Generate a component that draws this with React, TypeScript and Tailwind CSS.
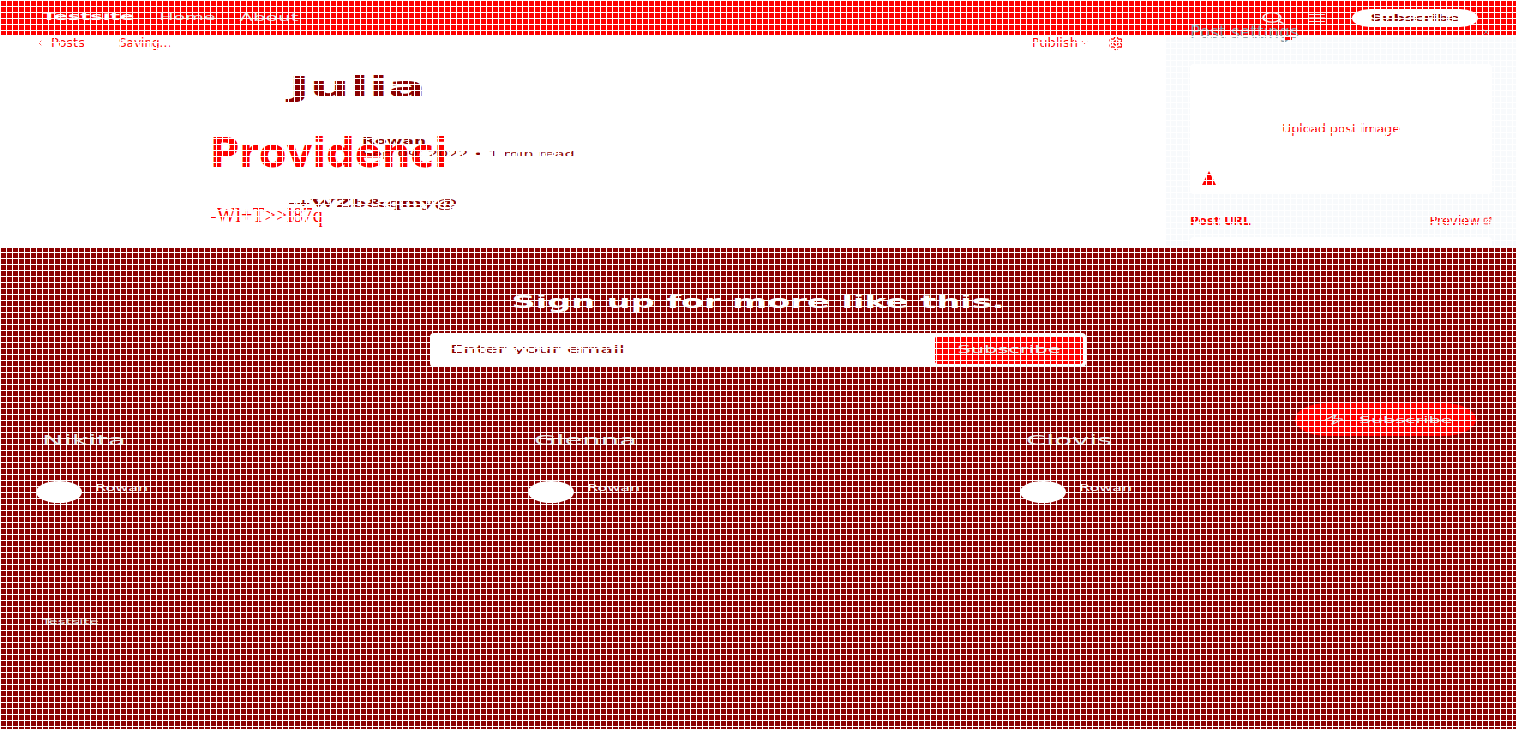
import { ChevronDown, ChevronLeft, ExternalLink, Menu, Search, Settings, X, Zap } from "lucide-react"

const sans = "font-['DejaVu_Sans',sans-serif]"

// site text is squashed to half height in the reference
function Squash({ className, children }: { className?: string; children: React.ReactNode }) {
  return <span className={`inline-block scale-y-50 whitespace-nowrap ${className ?? ""}`}>{children}</span>
}

function AuthorColumn({ name }: { name: string }) {
  return (
    <div className="flex flex-col w-[492px]">
      <div className="pl-[6px] h-[34px] flex items-center">
        <Squash className="text-[29px] text-[#e5e5e5] leading-none">{name}</Squash>
      </div>
      <div className="flex items-center gap-[13px] mt-[23px]">
        <div className="w-[46px] h-[22px] rounded-[50%] bg-white" />
        <Squash className="text-[16px] font-medium text-white leading-none -mt-[8px]">Rowan</Squash>
      </div>
    </div>
  )
}

export default function App() {
  return (
    <div className={`relative w-full h-[729px] overflow-hidden bg-white flex flex-col ${sans}`}>
      {/* Site header */}
      <header className="h-[35px] shrink-0 bg-[#ff0000] flex items-center justify-between pl-[42px] pr-[38px]">
        <nav className="flex items-center -mt-[2px]">
          <Squash className="text-[21px] font-bold text-white leading-none">Testsite</Squash>
          <Squash className="ml-[25px] text-[19px] text-[#e5e5e5] leading-none">Home</Squash>
          <Squash className="ml-[24px] text-[20px] text-[#e5e5e5] leading-none">About</Squash>
        </nav>
        <div className="flex items-center">
          <Search preserveAspectRatio="none" className="w-[26px] h-[14px] text-[#eeeeee] stroke-[2]" />
          <Menu preserveAspectRatio="none" className="ml-[20px] w-[22px] h-[12px] text-[#eeeeee] stroke-[2]" />
          <button className="ml-[24px] w-[126px] h-[18px] rounded-[18px/9px] bg-white flex items-center justify-center">
            <Squash className="text-[16px] font-bold text-[#8b0000] leading-none">Subscribe</Squash>
          </button>
        </div>
      </header>

      {/* Editor */}
      <div className="h-[213px] shrink-0 flex">
        <div className="relative flex-1">
          <div className="h-[15px] flex items-center justify-between pl-[36px] pr-[42px]">
            <div className="flex items-center text-[12px] text-[#ff0000]">
              <ChevronLeft className="w-[8px] h-[10px]" />
              <span className="ml-[7px] text-[13px]">Posts</span>
              <span className="ml-[34px]">Saving...</span>
            </div>
            <div className="flex items-center text-[13px] text-[#ff0000]">
              <span>Publish</span>
              <ChevronDown className="w-[9px] h-[9px] ml-[2px]" />
              <Settings className="ml-[19px] w-[16px] h-[16px]" />
            </div>
          </div>

          {/* Article head, its lines overlap in the reference */}
          <Squash className="absolute left-[289px] top-[24px] text-[56px] font-bold text-[#8b0000] leading-none">Julia</Squash>
          <span className="absolute left-[210px] top-[98px] text-[40px] font-bold text-[#ff0000] leading-none whitespace-nowrap">Providenci</span>
          <Squash className="absolute left-[362px] top-[98px] text-[17px] font-bold text-[#8b0000] leading-none">Rowan</Squash>
          <Squash className="absolute left-[362px] top-[111px] text-[16px] text-[#8b0000] leading-none">Sep 09, 2022 • 1 min read</Squash>
          <Squash className="absolute left-[288px] top-[155px] font-['Liberation_Serif',serif] text-[25px] font-bold text-[#8b0000] leading-none">-+WZb&amp;qmy@</Squash>
          <span className="absolute left-[210px] top-[170px] font-['Liberation_Serif',serif] text-[20px] text-[#ff0000] leading-none whitespace-nowrap">-Wl+T&gt;&gt;l87q</span>
        </div>

        {/* Post settings, the title rides up over the site header */}
        <aside className="w-[350px] shrink-0 h-[213px] bg-[#f8fafc] px-[24px] z-10">
          <div className="relative -mt-[9px] h-[12px] flex items-center justify-between text-[17px] leading-none text-[#8a9aa3]">
            <span>Post settings</span>
            <X className="w-[10px] h-[10px] mr-[1px]" />
            <span className="absolute left-[95px] top-[11px] w-[7px] h-[3px] bg-[#ff0000]" />
          </div>
          <div className="mt-[26px] h-[130px] bg-white rounded flex flex-col items-center justify-center relative">
            <button className="w-[135px] h-[34px] bg-white rounded text-[12.5px] text-[#ff0000]">Upload post image</button>
            <svg viewBox="0 0 14 14" className="absolute left-[12px] bottom-[9px] w-[14px] h-[14px] fill-[#ff0000]">
              <path d="M7 0 10 6 14 14H0L4 6Z" />
            </svg>
          </div>
          <div className="mt-[17px] flex items-center justify-between text-[13px] text-[#ff0000]">
            <span className="text-[12px] font-bold">Post URL</span>
            <span className="flex items-center">Preview<ExternalLink className="ml-[3px] w-[9px] h-[9px]" /></span>
          </div>
          <div className="mt-[6px] h-[9px] rounded-t bg-white" />
        </aside>
      </div>

      {/* Sign up and read more */}
      <section className="flex-1 bg-[#8b0000] flex flex-col relative">
        <div className="flex flex-col items-center pt-[38px]">
          <Squash className="text-[33.6px] font-bold text-white leading-none">Sign up for more like this.</Squash>
          <div className="mt-[13px] w-[656px] h-[34px] bg-white rounded-[4px] flex items-center justify-between pl-[20px] pr-[3px]">
            <Squash className="text-[21px] text-[#8b0000] leading-none">Enter your email</Squash>
            <button className="w-[148px] h-[28px] rounded-[3px] bg-[#ff0000] flex items-center justify-center">
              <Squash className="text-[21px] text-[#e5e5e5] leading-none">Subscribe</Squash>
            </button>
          </div>
        </div>

        <div className="mt-[57px] pl-[36px] flex">
          <AuthorColumn name="Nikita" />
          <AuthorColumn name="Glenna" />
          <AuthorColumn name="Clovis" />
        </div>

        <div className="mt-[106px] pl-[42px]">
          <Squash className="text-[15px] text-[#e5e5e5] leading-none">Testsite</Squash>
        </div>

        {/* Floating subscribe button */}
        <button className="absolute left-[1295px] top-[155px] w-[181px] h-[33px] rounded-[33px/16.5px] bg-[#ff0000] flex items-center">
          <Zap preserveAspectRatio="none" className="ml-[28px] w-[22px] h-[11px] text-[#dddddd]" />
          <Squash className="ml-[14px] text-[19px] font-medium text-[#e5e5e5] leading-none">Subscribe</Squash>
        </button>
      </section>

      {/* White lattice laid over the whole page */}
      <div className="absolute inset-0 z-20 pointer-events-none bg-[linear-gradient(to_right,white_1px,transparent_1px),linear-gradient(to_bottom,white_1px,transparent_1px)] bg-[size:6px_6px]" />
    </div>
  )
}
